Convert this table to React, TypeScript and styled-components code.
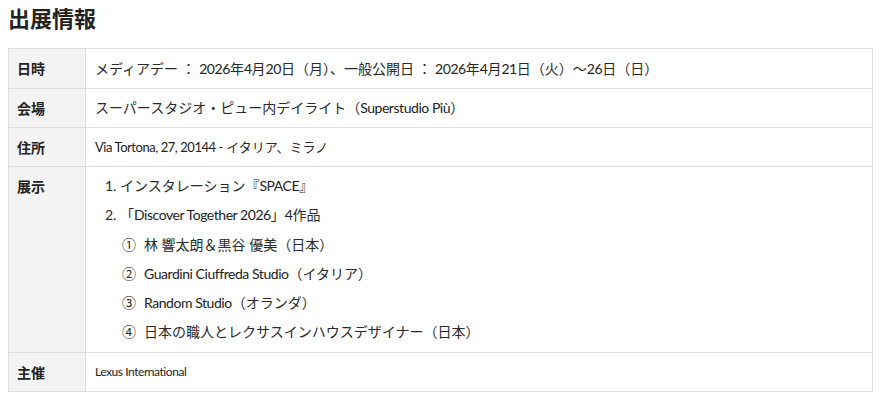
import React from 'react'
import styled, { createGlobalStyle } from 'styled-components'

const GlobalStyle = createGlobalStyle`
  body {
    margin: 0;
    background: #fff;
    color: #2a2a2a;
    font-family: Lato, 'Noto Sans CJK JP', sans-serif;
  }
`

const En = styled.span`
  font-family: Lato, sans-serif;
  font-weight: 400;
  letter-spacing: -0.45px;
  color: #222;
`

const subItems = [
  { mark: '①', text: <>林 響太朗＆黒谷 優美（日本）</> },
  { mark: '②', text: <><En>Guardini Ciuffreda Studio</En>（イタリア）</> },
  { mark: '③', text: <><En>Random Studio</En>（オランダ）</> },
  { mark: '④', text: <>日本の職人とレクサスインハウスデザイナー（日本）</> },
]

const App = () => {
  return (
    <>
      <GlobalStyle />
      <Page>
        <Heading>出展情報</Heading>
        <Table>
          <tbody>
            <Row>
              <Label>日時</Label>
              <Value $tall>
                メディアデー ： <En>2026</En>年<En>4</En>月<En>20</En>日（月）、一般公開日 ：{' '}
                <En>2026</En>年<En>4</En>月<En>21</En>日（火）～<En>26</En>日（日）
              </Value>
            </Row>
            <Row>
              <Label>会場</Label>
              <Value>
                スーパースタジオ・ピュー内デイライト（<En>Superstudio Più</En>）
              </Value>
            </Row>
            <Row>
              <Label>住所</Label>
              <Value $size={13}>
                <En>Via Tortona, 27, 20144 -</En> イタリア、ミラノ
              </Value>
            </Row>
            <Row>
              <Label>展示</Label>
              <Value>
                <List>
                  <Item>インスタレーション『<En>SPACE</En>』</Item>
                  <Item>
                    「<En>Discover Together 2026</En>」<En>4</En>作品
                    {subItems.map((s) => (
                      <SubItem key={s.mark}>
                        <Mark>{s.mark}</Mark>
                        {s.text}
                      </SubItem>
                    ))}
                  </Item>
                </List>
              </Value>
            </Row>
            <Row>
              <Label>主催</Label>
              <Value $size={12}>
                <En>Lexus International</En>
              </Value>
            </Row>
          </tbody>
        </Table>
      </Page>
    </>
  )
}

const Page = styled.div`
  padding: 4px 12px 10px 8px;
`

const Heading = styled.h2`
  margin: 0 0 18px;
  font-family: 'Noto Sans CJK JP', sans-serif;
  font-size: 22px;
  font-weight: 700;
  line-height: 26px;
  color: #222;
`

const Table = styled.table`
  width: 865px;
  border-collapse: collapse;
  border: 1px solid #dedede;
`

const Row = styled.tr`
  border-bottom: 1px solid #dedede;
`

const Label = styled.th`
  width: 60px;
  padding: 9px 8px;
  background: #f4f4f4;
  border-right: 1px solid #dedede;
  text-align: left;
  vertical-align: top;
  font-family: 'Noto Sans CJK JP', sans-serif;
  font-size: 14px;
  font-weight: 700;
  line-height: 20px;
  color: #222;
`

const Value = styled.td<{ $size?: number; $tall?: boolean }>`
  padding: 9px 9px;
  vertical-align: top;
  font-size: ${(p) => p.$size ?? 14}px;
  line-height: ${(p) => (p.$tall ? 21 : 20)}px;
`

const List = styled.ol`
  margin: 0;
  padding: 0 0 2px 25px;
`

const Item = styled.li`
  margin-bottom: 9px;
  &:last-child {
    margin-bottom: 0;
  }
`

const SubItem = styled.div`
  height: 20px;
  margin-top: 9px;
  padding-left: 2px;
`

const Mark = styled.span`
  display: inline-block;
  width: 22px;
  font-family: 'Noto Sans CJK JP', sans-serif;
`

export default App
